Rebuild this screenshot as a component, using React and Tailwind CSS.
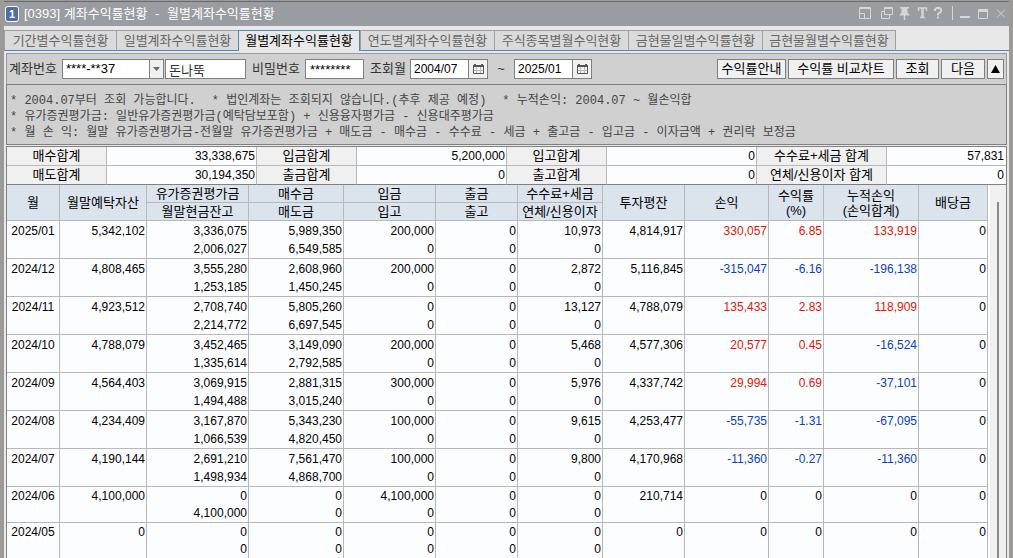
import { Fragment } from 'react'
import clsx from 'clsx'

const tabs = [
  { label: '기간별수익률현황', width: 'w-[112px]' },
  { label: '일별계좌수익률현황', width: 'w-[122px]' },
  { label: '월별계좌수익률현황', width: 'w-[122px]', active: true },
  { label: '연도별계좌수익률현황', width: 'w-[134px]' },
  { label: '주식종목별월수익현황', width: 'w-[134px]' },
  { label: '금현물일별수익률현황', width: 'w-[134px]' },
  { label: '금현물월별수익률현황', width: 'w-[134px]' },
]

const summary = [
  [
    ['매수합계', '33,338,675'],
    ['입금합계', '5,200,000'],
    ['입고합계', '0'],
    ['수수료+세금 합계', '57,831'],
  ],
  [
    ['매도합계', '30,194,350'],
    ['출금합계', '0'],
    ['출고합계', '0'],
    ['연체/신용이자 합계', '0'],
  ],
]

const summaryCols = ['w-[100px]', 'w-[150px]', 'w-[100px]', 'w-[150px]', 'w-[100px]', 'w-[150px]', 'w-[130px]', 'w-[119px]']

const gridCols = [
  'w-[53px]',
  'w-[87px]',
  'w-[102px]',
  'w-[95px]',
  'w-[92px]',
  'w-[82px]',
  'w-[85px]',
  'w-[82px]',
  'w-[84px]',
  'w-[55px]',
  'w-[95px]',
  'w-[69px]',
]

// month, asset, [valuation, cash], [buy, sell], [deposit, stock in], [withdraw, stock out], [fee, interest], average, profit, rate, total, dividend
const rows = [
  ['2025/01', '5,342,102', ['3,336,075', '2,006,027'], ['5,989,350', '6,549,585'], ['200,000', '0'], ['0', '0'], ['10,973', '0'], '4,814,917', '330,057', '6.85', '133,919', '0'],
  ['2024/12', '4,808,465', ['3,555,280', '1,253,185'], ['2,608,960', '1,450,245'], ['200,000', '0'], ['0', '0'], ['2,872', '0'], '5,116,845', '-315,047', '-6.16', '-196,138', '0'],
  ['2024/11', '4,923,512', ['2,708,740', '2,214,772'], ['5,805,260', '6,697,545'], ['0', '0'], ['0', '0'], ['13,127', '0'], '4,788,079', '135,433', '2.83', '118,909', '0'],
  ['2024/10', '4,788,079', ['3,452,465', '1,335,614'], ['3,149,090', '2,792,585'], ['200,000', '0'], ['0', '0'], ['5,468', '0'], '4,577,306', '20,577', '0.45', '-16,524', '0'],
  ['2024/09', '4,564,403', ['3,069,915', '1,494,488'], ['2,881,315', '3,015,240'], ['300,000', '0'], ['0', '0'], ['5,976', '0'], '4,337,742', '29,994', '0.69', '-37,101', '0'],
  ['2024/08', '4,234,409', ['3,167,870', '1,066,539'], ['5,343,230', '4,820,450'], ['100,000', '0'], ['0', '0'], ['9,615', '0'], '4,253,477', '-55,735', '-1.31', '-67,095', '0'],
  ['2024/07', '4,190,144', ['2,691,210', '1,498,934'], ['7,561,470', '4,868,700'], ['100,000', '0'], ['0', '0'], ['9,800', '0'], '4,170,968', '-11,360', '-0.27', '-11,360', '0'],
  ['2024/06', '4,100,000', ['0', '4,100,000'], ['0', '0'], ['4,100,000', '0'], ['0', '0'], ['0', '0'], '210,714', '0', '0', '0', '0'],
  ['2024/05', '0', ['0', '0'], ['0', '0'], ['0', '0'], ['0', '0'], ['0', '0'], '0', '0', '0', '0', '0'],
]

function tone(value) {
  if (value === '0') return 'text-black'
  return value.startsWith('-') ? 'text-[#0a3fc0]' : 'text-[#e61505]'
}

function TitleBar() {
  return (
    <header className="flex h-[25px] shrink-0 items-center border-t border-[#6b6b6b] bg-[#999ca0] pl-[1px] pr-[2px] text-white">
      <span className="flex h-4 w-[14px] items-center justify-center rounded-[3px] border border-white bg-[#4f6cab] text-[11px] font-bold leading-none">
        1
      </span>
      <h1 className="ml-[5px] flex-1 whitespace-nowrap text-[13px] leading-4">
        [0393] 계좌수익률현황 <span className="mx-1">-</span> 월별계좌수익률현황
      </h1>
      <svg width="150" height="16" viewBox="0 0 150 16" fill="none" stroke="#d4d6d8" aria-hidden="true">
        <path d="M2.500 1.500h11v11h-11zM2 2.500h12M2.500 7.500h5v5h-5z" />
        <path d="M27.500 1.500h8v7h-8zM27 2.500h9M27 5.500h-2.500v7h8V9" />
        <path d="M43 1h9v1.500h-1.500v4l2.500 3H42l2.500-3v-4H43z" fill="#d4d6d8" stroke="none" />
        <path d="M47.500 9v5" strokeWidth="1.500" />
        <path d="M61.500 5V2h8v3M63 11.500h5" strokeWidth="1.500" />
        <path d="M65.500 2v9" strokeWidth="2.500" />
        <path d="M78 5V3.500L79.500 2h3L84 3.500v2L81 8v1.500M81 10.500v2" strokeWidth="2" />
        <path d="M95.500 0v14" />
        <path d="M103 11h10" strokeWidth="2" />
        <path d="M121.500 3.500h9v9h-9z" />
        <path d="M121 4.500h10" strokeWidth="3" />
        <path d="M140 3.500l8 8M148 3.500l-8 8" />
      </svg>
    </header>
  )
}

function MonthField({ id, label, value }) {
  return (
    <div className="flex h-5 w-[78px] border border-[#808080] bg-white">
      <input id={id} aria-label={label} defaultValue={value} className="min-w-0 flex-1 pl-[3px] text-[12px] leading-4 text-black outline-none" />
      <button type="button" aria-label="달력" className="flex w-[19px] items-center justify-center border-l border-[#808080] bg-[#f0f0f0]">
        <svg width="11" height="10" viewBox="0 0 11 10" fill="none">
          <path d="M1 0h2v1h5V0h2v1h1v2H0V1h1z" fill="#555" />
          <path d="M.5 3v6.500h10V3" stroke="#555" />
          <path d="M3.500 3v6M7.500 3v6M1 6.500h9" stroke="#bbb" />
        </svg>
      </button>
    </div>
  )
}

function ToolButton({ className, children }) {
  return (
    <button type="button" className={clsx('h-5 whitespace-nowrap border border-[#808080] bg-[#f0f0f0] text-center leading-4 text-black', className)}>
      {children}
    </button>
  )
}

function SearchBar() {
  return (
    <form className="flex h-8 shrink-0 items-center border border-[#9a9a9a] border-b-[#808080] bg-[#d0d0d0] pl-[2px] pr-[2px]" onSubmit={(e) => e.preventDefault()}>
      <label htmlFor="account" className="w-[53px]">계좌번호</label>
      <div className="relative h-5 w-[102px]">
        <select id="account" className="h-5 w-full appearance-none border border-[#808080] bg-white pl-[3px] text-[13px] leading-4 text-black">
          <option>****-**37</option>
        </select>
        <span className="pointer-events-none absolute inset-y-px right-px flex w-[14px] items-center justify-center border-l border-[#808080] bg-[#f0f0f0]">
          <svg width="7" height="4" viewBox="0 0 7 4"><path d="M0 0h7L3.500 4z" fill="#666" /></svg>
        </span>
      </div>
      <input aria-label="계좌명" defaultValue="돈나뚝" className="ml-px h-5 w-[81px] border border-[#808080] bg-white pl-[3px] leading-4 outline-none" />
      <label htmlFor="password" className="ml-[6px] w-[53px]">비밀번호</label>
      <input id="password" defaultValue="********" className="h-5 w-[59px] border border-[#808080] bg-white pl-1 text-black outline-none" />
      <label htmlFor="from" className="ml-[6px] w-10">조회월</label>
      <MonthField id="from" label="조회월 시작" value="2004/07" />
      <span className="w-[26px] text-center">~</span>
      <MonthField id="to" label="조회월 끝" value="2025/01" />
      <div className="ml-auto flex gap-[2px]">
        <ToolButton className="w-[69px]">수익률안내</ToolButton>
        <ToolButton className="w-[106px]">수익률 비교차트</ToolButton>
        <ToolButton className="w-[43px]">조회</ToolButton>
        <ToolButton className="w-[44px]">다음</ToolButton>
        <ToolButton className="flex w-[17px] items-center justify-center">
          <svg width="9" height="8" viewBox="0 0 9 8" role="img" aria-label="접기"><path d="M4.500 0L9 8H0z" fill="#000" /></svg>
        </ToolButton>
      </div>
    </form>
  )
}

function Notes() {
  return (
    <div className="shrink-0 whitespace-nowrap border border-t-0 border-[#808080] bg-[#d0d0d0] px-[3px] pb-[3px] pt-2 font-[Liberation_Mono,Noto_Sans_CJK_KR,monospace] text-[12px] leading-4 text-[#444]">
      <p className="flex gap-4">
        <span>* 2004.07부터 조회 가능합니다.</span>
        <span>* 법인계좌는 조회되지 않습니다.(추후 제공 예정)</span>
        <span>* 누적손익: 2004.07 ~ 월손익합</span>
      </p>
      <p>* 유가증권평가금: 일반유가증권평가금(예탁담보포함) + 신용융자평가금 - 신용대주평가금</p>
      <p>* 월 손 익: 월말 유가증권평가금-전월말 유가증권평가금 + 매도금 - 매수금 - 수수료 - 세금 + 출고금 - 입고금 - 이자금액 + 권리락 보정금</p>
    </div>
  )
}

function SummaryTable() {
  return (
    <table className="mt-px w-full shrink-0 table-fixed border-separate border-spacing-0 border-x border-t border-[#808080] bg-[#fcfdfe] text-black">
      <colgroup>
        {summaryCols.map((w, i) => <col key={i} className={w} />)}
      </colgroup>
      <tbody>
        {summary.map((line, i) => (
          <tr key={i} className="h-[19px]">
            {line.map(([label, value], j) => (
              <Fragment key={label}>
                <th className={clsx('whitespace-nowrap border-b border-r border-r-[#b8b8b8] bg-[#f0f0f0] p-0 font-normal leading-[18px]', i ? 'border-b-[#808080]' : 'border-b-[#b8b8b8]')}>
                  {label}
                </th>
                <td className={clsx('border-b py-0 pl-0 text-right text-[12px] leading-[18px]', i ? 'border-b-[#808080]' : 'border-b-[#b8b8b8]', j < 3 ? 'border-r border-r-[#b8b8b8] pr-px' : 'pr-[2px]')}>
                  {value}
                </td>
              </Fragment>
            ))}
          </tr>
        ))}
      </tbody>
    </table>
  )
}

const headCell = 'whitespace-nowrap border-b border-r border-[#b8b8b8] bg-[#dbe3ed] p-0 font-normal'

function MonthlyTable() {
  return (
    <table className="min-w-0 flex-1 table-fixed border-separate border-spacing-0 bg-[#fcfdfe] text-black">
      <colgroup>
        {gridCols.map((w, i) => <col key={i} className={w} />)}
      </colgroup>
      <thead className="leading-[17px]">
        <tr className="h-[18px]">
          <th rowSpan={2} className={headCell}>월</th>
          <th rowSpan={2} className={headCell}>월말예탁자산</th>
          <th className={headCell}>유가증권평가금</th>
          <th className={headCell}>매수금</th>
          <th className={headCell}>입금</th>
          <th className={headCell}>출금</th>
          <th className={headCell}>수수료+세금</th>
          <th rowSpan={2} className={headCell}>투자평잔</th>
          <th rowSpan={2} className={headCell}>손익</th>
          <th rowSpan={2} className={clsx(headCell, 'leading-[15px]')}>수익률<br />(%)</th>
          <th rowSpan={2} className={clsx(headCell, 'leading-[15px]')}>누적손익<br />(손익합계)</th>
          <th rowSpan={2} className={headCell}>배당금</th>
        </tr>
        <tr className="h-[18px]">
          <th className={headCell}>월말현금잔고</th>
          <th className={headCell}>매도금</th>
          <th className={headCell}>입고</th>
          <th className={headCell}>출고</th>
          <th className={headCell}>연체/신용이자</th>
        </tr>
      </thead>
      <tbody className="text-[12px]">
        {rows.map((row, r) => (
          <tr key={row[0]} className={r < 7 ? 'h-[38px] leading-[18px]' : 'h-9 leading-[17px]'}>
            {row.map((cell, c) => (
              <td
                key={c}
                className={clsx(
                  'border-b border-r border-[#b8b8b8] px-px pb-0 pt-px align-top',
                  c === 0 ? 'text-center' : 'text-right',
                  c >= 8 && c <= 10 && tone(cell)
                )}
              >
                {Array.isArray(cell) ? cell.map((v, k) => <div key={k}>{v}</div>) : cell}
              </td>
            ))}
          </tr>
        ))}
      </tbody>
    </table>
  )
}

export default function App() {
  return (
    <div className="flex h-screen flex-col overflow-hidden border-x-4 border-t border-[#9c9a98] bg-[#e8e8e8] font-[Liberation_Sans,Noto_Sans_CJK_KR,sans-serif] text-[13px] leading-4 text-[#333]">
      <TitleBar />
      <nav className="mt-1 flex h-[21px] shrink-0 border-b border-[#4a86cc]">
        {tabs.map((tab) => (
          <button
            key={tab.label}
            type="button"
            className={clsx(
              'h-[21px] whitespace-nowrap border-l border-t text-center',
              tab.width,
              tab.active ? 'border-r border-[#4a86cc] bg-[#e8e8e8] text-black' : 'border-[#a0a0a0] border-b border-b-[#4a86cc] bg-[#dadada] text-[#666] last:border-r'
            )}
          >
            {tab.label}
          </button>
        ))}
      </nav>
      <main className="mx-[2px] mt-[2px] flex min-h-0 flex-1 flex-col">
        <SearchBar />
        <Notes />
        <SummaryTable />
        <div className="flex shrink-0 items-start border-x border-[#808080]">
          <MonthlyTable />
          <div className="flex w-[18px] shrink-0 self-stretch border-l-2 border-[#fcfdfe] bg-[#f0f0f0] pl-[7px] pt-[17px]">
            <div className="w-[2px] bg-[#8a8a8a]" />
          </div>
        </div>
      </main>
    </div>
  )
}
